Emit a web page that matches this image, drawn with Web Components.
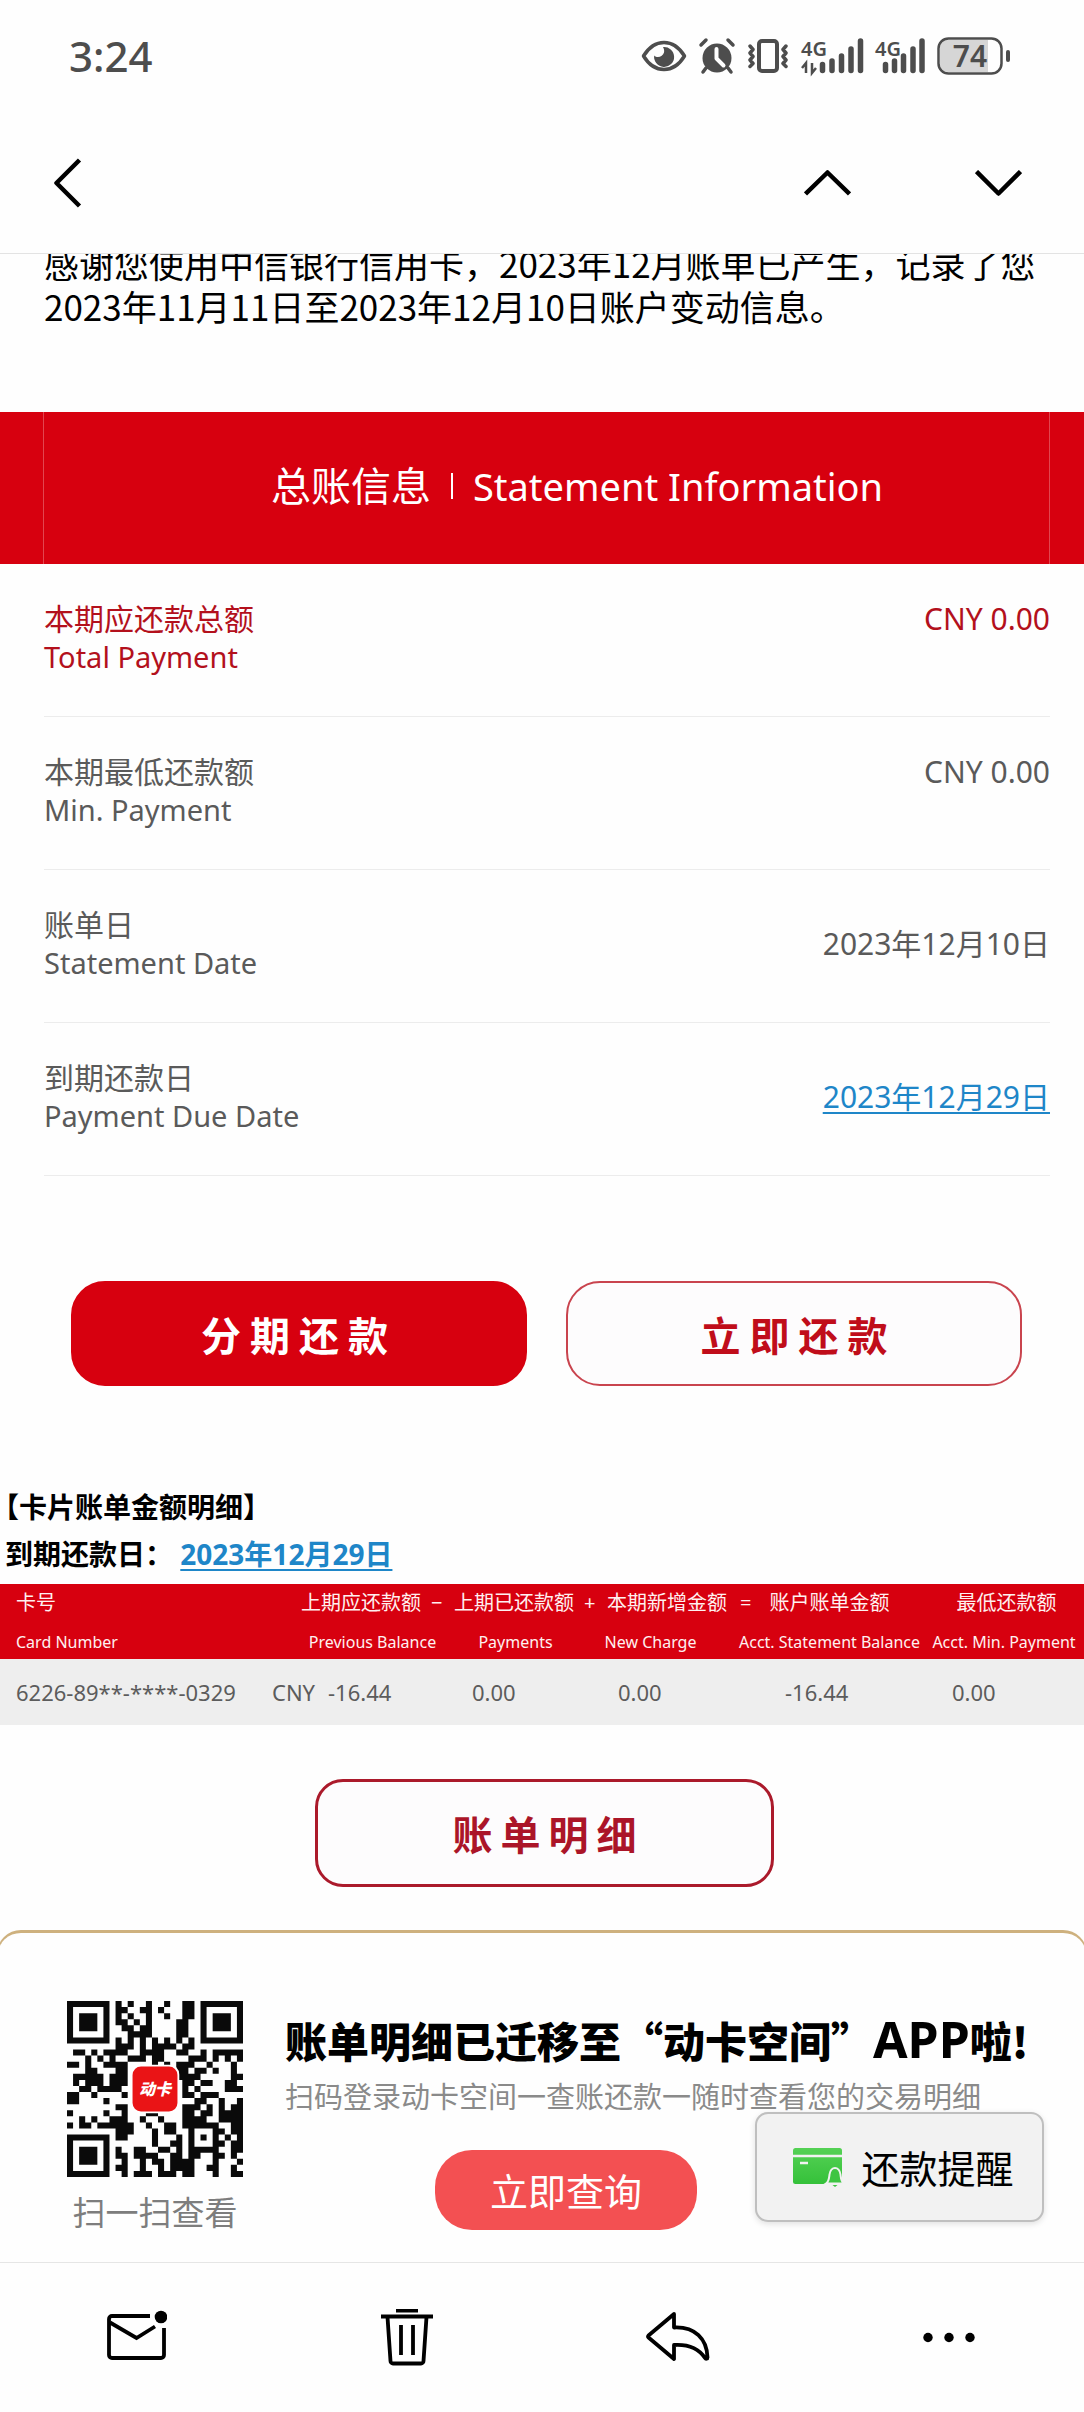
<!DOCTYPE html>
<html lang="zh-CN">
<head>
<meta charset="utf-8">
<meta name="viewport" content="width=device-width, initial-scale=1">
<title>信用卡电子账单</title>
<style>
html, body { margin: 0; height: 100%; }
body {
  font-family: "Noto Sans", "Noto Sans CJK SC", sans-serif;
  background: #fefefe; color: #000;
}
</style>
</head>
<body>
<mail-app></mail-app>

<template id="t-app">
<style>
:host { display: flex; flex-direction: column; height: 100vh; overflow: hidden; background: #fefefe; }
main { flex: 1; min-height: 0; overflow: hidden; position: relative; }
.intro { margin: -13px 44px 0; font: 35px/43px "Noto Sans CJK SC", sans-serif; }
.hero { margin-top: 85px; }
.rows { padding: 0 34px 0 44px; }
.actions { display: grid; grid-template-columns: 1fr 1fr; gap: 39px; padding: 0 62px 0 71px; margin-top: 105px; }
.more { display: flex; justify-content: center; margin-top: 54px; padding-left: 5px; }
.more pill-button { width: 459px; }
remind-button { position: absolute; right: 40px; bottom: 40px; }
</style>
<status-bar></status-bar>
<nav-bar></nav-bar>
<main>
  <p class="intro">感谢您使用中信银行信用卡，2023年12月账单已产生，记录了您2023年11月11日至2023年12月10日账户变动信息。</p>
  <statement-title class="hero"><span slot="zh">总账信息</span><span slot="en">Statement Information</span></statement-title>
  <div class="rows">
    <info-row tone="red"><span slot="zh">本期应还款总额</span><span slot="en">Total Payment</span>CNY 0.00</info-row>
    <info-row><span slot="zh">本期最低还款额</span><span slot="en">Min. Payment</span>CNY 0.00</info-row>
    <info-row middle><span slot="zh">账单日</span><span slot="en">Statement Date</span>2023年12月10日</info-row>
    <info-row middle><span slot="zh">到期还款日</span><span slot="en">Payment Due Date</span><date-link>2023年12月29日</date-link></info-row>
  </div>
  <div class="actions">
    <pill-button kind="solid">分期还款</pill-button>
    <pill-button kind="line">立即还款</pill-button>
  </div>
  <card-details></card-details>
  <div class="more"><pill-button kind="dark">账单明细</pill-button></div>
  <app-promo></app-promo>
  <remind-button>还款提醒</remind-button>
</main>
<tool-bar></tool-bar>
</template>

<template id="t-status">
<style>
:host { display: flex; align-items: center; justify-content: space-between; height: 112px; padding: 0 74px 0 69px; flex: none; color: #4d4d4d; }
time { font-size: 42px; line-height: 60px; font-weight: 500; }
.icons { display: flex; align-items: center; gap: 12px; }
svg { display: block; fill: #4d4d4d; stroke: none; overflow: visible; }
text { font-family: "Noto Sans", sans-serif; font-weight: 600; }
</style>
<time>3:24</time>
<div class="icons">
  <svg width="46" height="38" viewBox="0 0 46 38"><path d="M2.500 19C8 10 15 5.500 23 5.500S38 10 43.500 19C38 28 31 32.500 23 32.500S8 28 2.500 19Z" fill="none" stroke="#4d4d4d" stroke-width="3.500" stroke-linejoin="round"/><path d="M22 10a10 10 0 1 1-8.800 8.600c3 3 8.800 1.200 9.800-3 .5-2.200-.2-4.200-1-5.600Z"/></svg>
  <svg width="36" height="38" viewBox="0 0 36 38"><circle cx="18" cy="21" r="14.500"/><path d="M2 8l5-5M34 8l-5-5M7 31l-3 4M29 31l3 4" stroke="#4d4d4d" stroke-width="3.500" stroke-linecap="round"/><path d="M17.500 12v9.500l7 7" fill="none" stroke="#fff" stroke-width="4" stroke-linecap="round" stroke-linejoin="round"/></svg>
  <svg width="42" height="38" viewBox="0 0 42 38"><g fill="none" stroke="#4d4d4d" stroke-linejoin="round" stroke-linecap="round"><rect x="12" y="4" width="18" height="30" rx="3" stroke-width="4"/><path d="M3 9l3 3.500-3 3.500 3 3.500-3 3.500 3 3.500-3 3M39 9l-3 3.500 3 3.500-3 3.500 3 3.500-3 3.500 3 3" stroke-width="3.500"/></g></svg>
  <svg width="62" height="38" viewBox="0 0 62 38"><text x="0" y="19" font-size="20">4G</text><path d="M5 36V26l-4 5M11 26v10l4-5" fill="none" stroke="#4d4d4d" stroke-width="2.500"/><path d="M21.500 27.500v6M31 24v9.500M40.500 19v14.500M50 12v21.500M59.500 4v29.500" stroke="#4d4d4d" stroke-width="5.500" stroke-linecap="round"/></svg>
  <svg width="50" height="38" viewBox="0 0 50 38"><text x="0" y="19" font-size="20">4G</text><path d="M10.500 27.500v6M19.500 24v9.500M28.500 19v14.500M38 12v21.500M47 4v29.500" stroke="#4d4d4d" stroke-width="5.500" stroke-linecap="round"/></svg>
  <svg width="73" height="38" viewBox="0 0 73 38"><path d="M11 3h40v32H11a8 8 0 0 1-8-8V11a8 8 0 0 1 8-8Z" fill="#d6d6d6"/><rect x="1.500" y="1.500" width="63" height="35" rx="10" fill="none" stroke="#4d4d4d" stroke-width="2.500"/><rect x="69" y="13" width="4" height="12" rx="2"/><text x="33" y="30" font-size="30" text-anchor="middle">74</text></svg>
</div>
</template>

<template id="t-nav">
<style>
:host { display: flex; align-items: center; justify-content: space-between; height: 141px; padding: 0 62px 0 54px; flex: none; border-bottom: 1px solid #e3e3e3; }
.pair { display: flex; gap: 124px; }
button { border: 0; padding: 0; background: none; display: block; }
svg { display: block; fill: none; stroke: #000; stroke-width: 4.500; stroke-linejoin: round; }
</style>
<button aria-label="返回"><svg width="28" height="50" viewBox="0 0 28 50"><path d="M25.500 2L2.500 25l23 23"/></svg></button>
<div class="pair">
  <button aria-label="上一封"><svg width="47" height="26" viewBox="0 0 47 26"><path d="M1.500 24l22-21.500 22 21.500"/></svg></button>
  <button aria-label="下一封"><svg width="47" height="26" viewBox="0 0 47 26"><path d="M1.500 1.500l22 22 22-22"/></svg></button>
</div>
</template>

<template id="t-title">
<style>
:host { display: block; background: #d7000f; color: #fff; padding: 0 34px 0 43px; }
h1 { margin: 0; box-sizing: border-box; height: 152px; padding: 0 0 4px 61px; border: solid #e2454f; border-width: 0 1px; font-size: 40px; line-height: 56px; font-weight: 400; display: flex; align-items: center; justify-content: center; gap: 20px; }
i { width: 2px; height: 26px; background: #fff; }
::slotted([slot="en"]) { font-size: 38px; }
</style>
<h1><slot name="zh"></slot><i></i><slot name="en"></slot></h1>
</template>

<template id="t-row">
<style>
:host { display: flex; justify-content: space-between; align-items: flex-start; padding: 36px 0 40px; border-bottom: 1px solid #ececec; font-size: 30px; line-height: 38px; color: #5a5a5a; }
:host([tone="red"]) { color: #b3101c; }
:host([middle]) { align-items: center; }
.label { display: flex; flex-direction: column; }
::slotted([slot="en"]) { font-size: 29px; }
</style>
<div class="label"><slot name="zh"></slot><slot name="en"></slot></div>
<div><slot></slot></div>
</template>

<template id="t-link">
<style>
:host { display: inline; }
a { color: #1e86c8; text-decoration: underline; text-decoration-thickness: 2px; text-underline-offset: 4px; }
</style>
<a href="#"><slot></slot></a>
</template>

<template id="t-pill">
<style>
:host { display: block; }
button { box-sizing: border-box; width: 100%; height: 105px; border-radius: 34px; border: 2px solid #d7000f; background: #d7000f; color: #fff; padding: 0; font: 700 40px/56px "Noto Sans CJK SC", sans-serif; letter-spacing: 9px; }
:host([kind="line"]) button { background: #fdfcfd; border-color: #c9444e; color: #c00d1a; text-indent: 9px; }
:host([kind="dark"]) button { background: #fdfcfd; border: 3px solid #ab1a2b; color: #ab1528; border-radius: 28px; height: 108px; letter-spacing: 8px; text-indent: 8px; }
</style>
<button><slot></slot></button>
</template>

<template id="t-details">
<style>
:host { display: block; margin-top: 98px; }
h2, p { margin: 0 5px; font-size: 28px; line-height: 47px; font-weight: 700; }
h2 { text-spacing-trim: trim-start; }
table { width: 100%; margin-top: 6px; border-collapse: collapse; table-layout: fixed; }
th, td { padding: 0; text-align: left; white-space: nowrap; font-weight: 400; }
thead { background: #d7000f; color: #fff0f0; }
.zh th { height: 38px; font-size: 20px; line-height: 28px; padding-left: 5px; }
.en th { height: 37px; font-size: 16px; line-height: 24px; text-align: center; vertical-align: top; padding-top: 8px; box-sizing: border-box; }
.zh th:first-child, .en th:first-child, td:first-child { padding-left: 16px; text-align: left; }
.zh th:last-child { text-align: center; }
.op { margin-left: 10px; }
.eq { margin-right: 18px; }
.en .pay { padding-right: 20px; }
.en .new { padding-right: 36px; }
tbody td { height: 66px; font-size: 22px; line-height: 30px; color: #5c5c5c; background: #eee; }
tbody .pay { padding-left: 23px; }
tbody .new { padding-left: 16px; }
tbody .acct { padding-left: 50px; }
tbody .min { padding-left: 28px; }
</style>
<h2>【卡片账单金额明细】</h2>
<p>到期还款日：<date-link>2023年12月29日</date-link></p>
<table>
  <colgroup><col style="width:272px"><col style="width:24px"><col style="width:32px"><col style="width:121px"><col style="width:153px"><col style="width:133px"><col style="width:189px"><col style="width:160px"></colgroup>
  <thead>
    <tr class="zh"><th colspan="2">卡号</th><th colspan="2">上期应还款额<span class="op">−</span></th><th>上期已还款额<span class="op">+</span></th><th>本期新增金额</th><th><span class="eq">=</span>账户账单金额</th><th>最低还款额</th></tr>
    <tr class="en"><th colspan="2">Card Number</th><th colspan="2">Previous Balance</th><th class="pay">Payments</th><th class="new">New Charge</th><th>Acct. Statement Balance</th><th>Acct. Min. Payment</th></tr>
  </thead>
  <tbody>
    <tr><td>6226-89**-****-0329</td><td colspan="2">CNY</td><td>-16.44</td><td class="pay">0.00</td><td class="new">0.00</td><td class="acct">-16.44</td><td class="min">0.00</td></tr>
  </tbody>
</table>
</template>

<template id="t-promo">
<style>
:host { display: flex; gap: 42px; align-items: flex-start; margin: 43px -3px 0; padding: 68px 0 60px 69px; border: 3px solid #ceb17e; border-bottom: 0; border-radius: 24px 24px 0 0; border-left-width: 1px; border-right-width: 1px; }
figure { margin: 0; display: flex; flex-direction: column; align-items: center; gap: 16px; }
figcaption { font-size: 33px; line-height: 40px; color: #7d7d7d; }
.text { padding-top: 10px; display: flex; flex-direction: column; align-items: flex-start; white-space: nowrap; }
h2 { margin: 0; font: 900 42px/56px "Noto Sans CJK SC", sans-serif; }
h2 span { font-family: "Noto Sans", sans-serif; font-size: 50px; font-weight: 700; }
p { margin: 9px 0 33px; font-size: 29px; line-height: 40px; color: #8a8a8a; }
button { margin-left: 150px; width: 262px; height: 80px; border: 0; border-radius: 37px; padding: 0; background: #f35052; color: #fff; font: 38px/56px "Noto Sans CJK SC", sans-serif; }
</style>
<figure><qr-code></qr-code><figcaption>扫一扫查看</figcaption></figure>
<div class="text">
  <h2>账单明细已迁移至“动卡空间”<span>APP</span>啦!</h2>
  <p>扫码登录动卡空间一查账还款一随时查看您的交易明细</p>
  <button>立即查询</button>
</div>
</template>

<template id="t-qr">
<style>
:host { display: block; width: 176px; height: 176px; }
svg { display: block; }
text { font: italic 900 16px "Noto Sans CJK SC", sans-serif; fill: #fff; }
</style>
<svg width="176" height="176" viewBox="0 0 29 29" role="img" aria-label="二维码">
  <path id="m" fill="#0a0a0a"/>
  <rect x="10.500" y="10.500" width="8" height="8" rx="1.600" fill="#fff"/>
  <rect x="10.800" y="10.800" width="7.400" height="7.400" rx="1.400" fill="#ea1416"/>
  <g transform="scale(.16477)"><text x="88" y="94" text-anchor="middle">动卡</text></g>
</svg>
</template>

<template id="t-remind">
<style>
:host { display: block; }
button { box-sizing: border-box; display: flex; align-items: center; justify-content: center; gap: 18px; width: 289px; height: 110px; padding: 0 4px 0 12px; border: 2px solid #bfbfbf; border-radius: 13px; background: #f2f2f2; box-shadow: 0 2px 6px rgba(0,0,0,.12); color: #000; font: 38px/56px "Noto Sans CJK SC", sans-serif; }
svg { display: block; }
</style>
<button>
  <svg width="50" height="40" viewBox="0 0 50 40"><defs><linearGradient id="g" x1="0" y1="0" x2="0" y2="1"><stop offset="0" stop-color="#55d155"/><stop offset="1" stop-color="#35c13a"/></linearGradient></defs><rect y="1" width="49" height="36" rx="2.500" fill="url(#g)"/><path d="M0 9h49" stroke="#f2f2f2" stroke-width="2.500"/><path d="M7 16h8" stroke="#f2f2f2" stroke-width="2.500"/><path d="M33 36.500c3-2 3-5 3.500-9 .5-4 3-6.500 5.500-6.500s5 2.500 5.500 6.500c.5 4 .5 7 3.500 9Z" fill="#3fc543" stroke="#f2f2f2" stroke-width="2"/><path d="M39.500 38h5l-2.500 2Z" fill="#3fc543"/></svg>
  <slot></slot>
</button>
</template>

<template id="t-tools">
<style>
:host { display: grid; grid-template-columns: repeat(4, 1fr); align-items: center; justify-items: center; height: 149px; flex: none; border-top: 1px solid #e6e6e6; }
button { border: 0; padding: 0; background: none; }
svg { display: block; fill: none; stroke: #000; stroke-width: 3.800; }
.dots, .dot { fill: #000; stroke: none; }
</style>
<button aria-label="标记未读"><svg width="62" height="58" viewBox="-2 1 62 58"><path d="M43 8H5a3 3 0 0 0-3 3v36a3 3 0 0 0 3 3h49a3 3 0 0 0 3-3V20"/><path d="M3 14.500l26.500 15.500L48 18.500"/><circle class="dot" cx="54" cy="9" r="6.300"/></svg></button>
<button aria-label="删除"><svg width="52" height="58" viewBox="0 1 52 58"><path d="M0 8.500h52M15 2.500h22M6.500 9l3 44a2.500 2.500 0 0 0 2.500 2.500h28a2.500 2.500 0 0 0 2.500-2.500l3-44M20 17v30M32 17v30"/></svg></button>
<button aria-label="回复"><svg width="64" height="58" viewBox="0 1 64 58"><path d="M28 6L2.500 27.500a1.500 1.500 0 0 0 0 2L28 51V37c16-1 25 4 31 13 .8 1.200 2.500.8 2.500-.6C61 31 49 18.500 28 19.500Z" stroke-linejoin="round"/></svg></button>
<button aria-label="更多"><svg class="dots" width="54" height="58" viewBox="0 0 54 58"><circle cx="6" cy="28.500" r="4.700"/><circle cx="27" cy="28.500" r="4.700"/><circle cx="48" cy="28.500" r="4.700"/></svg></button>
</template>

<script>
function define(name, id, setup) {
  customElements.define(name, class extends HTMLElement {
    constructor() {
      super();
      const root = this.attachShadow({ mode: "open" });
      root.append(document.getElementById(id).content.cloneNode(true));
      if (setup) setup(root);
    }
  });
}

const MODULES = [
  "#######.#.#..#..#..##.#######",
  "#.....#.##..##.#...##.#.....#",
  "#.###.#.#.#..#..#..##.#.###.#",
  "#.###.#.##.#.#....##..#.###.#",
  "#.###.#..##.##....##..#.###.#",
  "#.....#...####....##..#.....#",
  "#######.#.#.#.#.#.#.#.#######",
  "........###.#.####.##........",
  ".##.#.####..####..##..#.#####",
  "...#.#.#..###.##....###.#.#.#",
  "##.#..####....#.#.###..#...#.",
  "...##...##........##.##.#..#.",
  ".#####.###........####.....##",
  ".#.###.###.........##.##..##.",
  "..##.####..........#.#....###",
  "##..#....#.........##.###....",
  "##....#..............##..#..#",
  "........##.........###.#.#.##",
  "#.....#..#...##....##.##.####",
  "..#.#..###..#..#...####..####",
  "#.##.######..#..##.######..##",
  "........###...#.##..#...##.##",
  "#######.##....#...#.#.#.#.#.#",
  "#.....#.......#..##.#...##.##",
  "#.###.#.#..##..##.#.#####..##",
  "#.###.#.##.####..##.##..##.#.",
  "#.###.#..#..#.##.####...#...#",
  "#.....#.##..#..#.####..##..#.",
  "#######..#.###.###.##...#..##"
];

define("date-link", "t-link");
define("status-bar", "t-status");
define("nav-bar", "t-nav");
define("statement-title", "t-title");
define("info-row", "t-row");
define("pill-button", "t-pill");
define("card-details", "t-details");
define("qr-code", "t-qr", root => {
  let d = "";
  MODULES.forEach((row, y) => {
    for (const run of row.matchAll(/#+/g)) d += `M${run.index} ${y}h${run[0].length}v1h-${run[0].length}z`;
  });
  root.getElementById("m").setAttribute("d", d);
});
define("app-promo", "t-promo");
define("remind-button", "t-remind");
define("tool-bar", "t-tools");
define("mail-app", "t-app");
</script>
</body>
</html>
